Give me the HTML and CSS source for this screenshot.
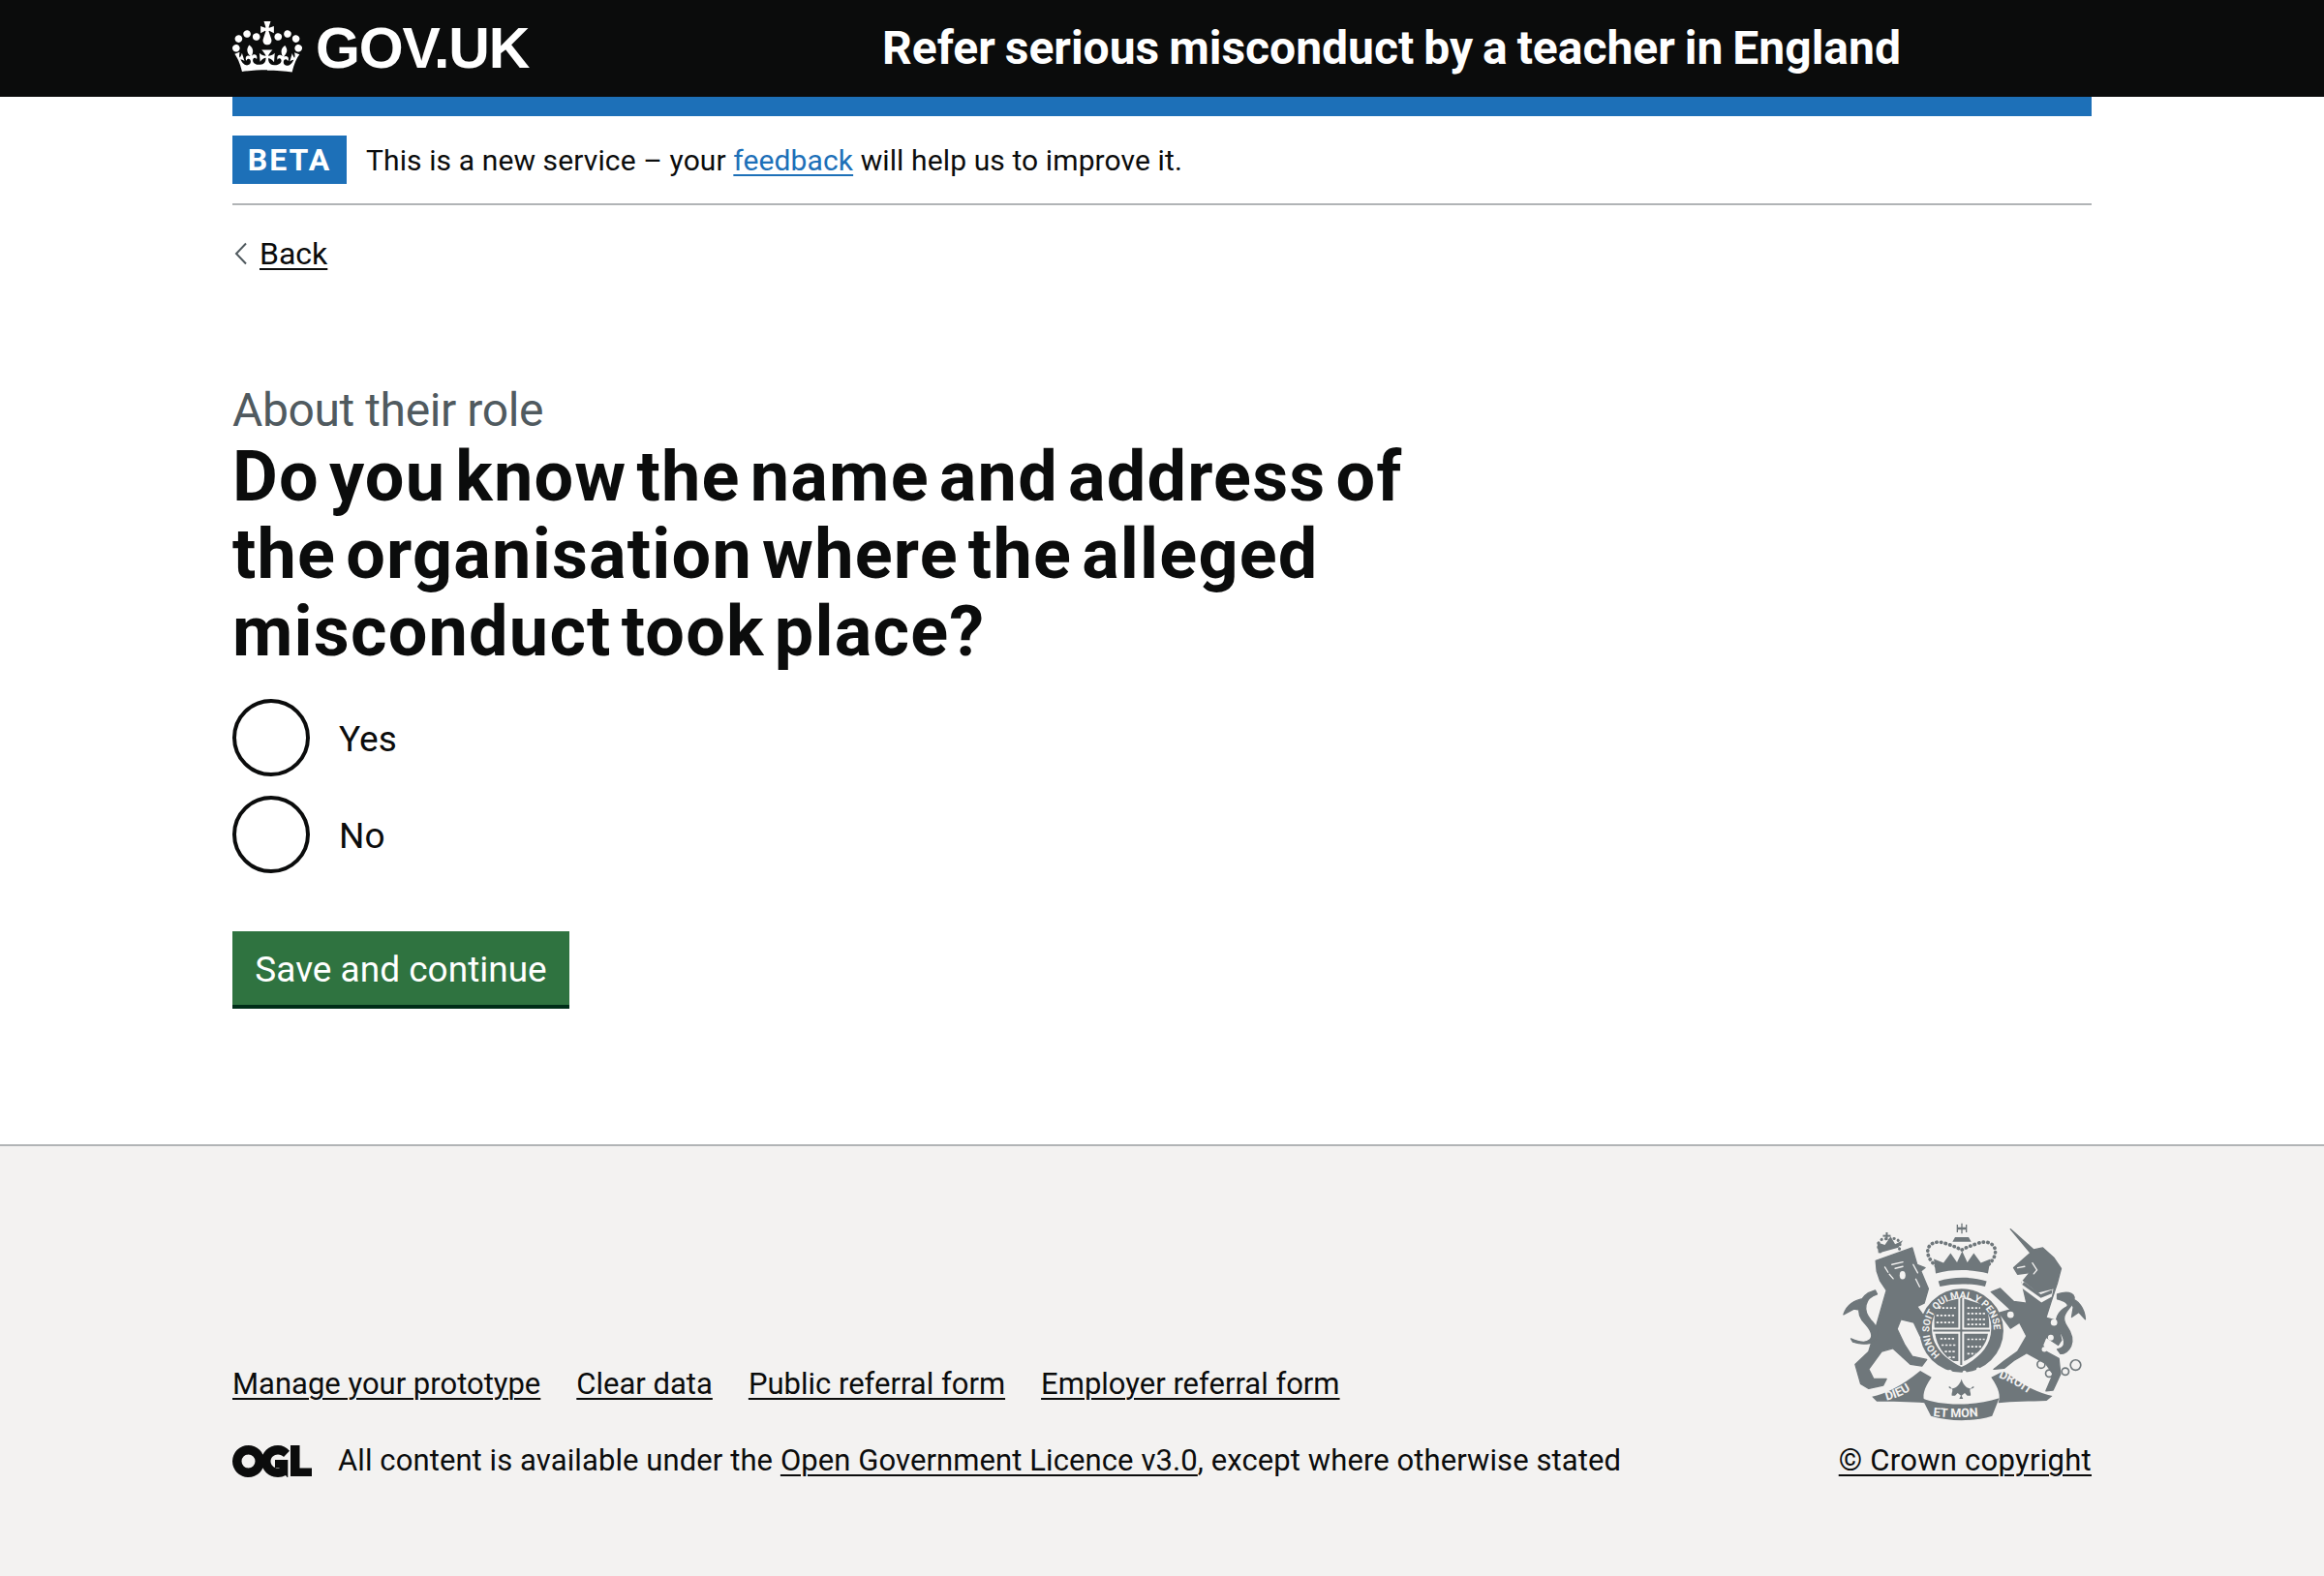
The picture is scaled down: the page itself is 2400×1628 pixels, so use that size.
FILE: index.html
```html
<!DOCTYPE html>
<html lang="en">
<head>
<meta charset="utf-8">
<title>Refer serious misconduct by a teacher in England</title>
<link rel="stylesheet" href="styles.css">
</head>
<body>
<header class="site-header">
  <div class="container site-header-inner">
    <a class="logo" href="#">
      <svg class="crown" viewBox="0 0 132 97" aria-hidden="true"><path fill="currentColor" d="M25 30.2c3.5 1.5 7.7-.2 9.1-3.7 1.5-3.6-.2-7.8-3.9-9.2-3.6-1.4-7.6.3-9.1 3.9-1.4 3.5.3 7.5 3.9 9zM9 39.5c3.6 1.5 7.8-.2 9.2-3.7 1.5-3.6-.2-7.8-3.9-9.1-3.6-1.5-7.6.2-9.1 3.8-1.4 3.5.3 7.5 3.8 9zM4.4 57.2c3.5 1.5 7.7-.2 9.1-3.8 1.5-3.6-.2-7.7-3.9-9.1-3.6-1.5-7.6.2-9.1 3.8-1.4 3.5.3 7.6 3.9 9.1zm38.3-21.4c3.5 1.5 7.7-.2 9.1-3.8 1.5-3.6-.2-7.7-3.9-9.1-3.6-1.5-7.6.2-9.1 3.8-1.3 3.6.4 7.7 3.9 9.1zm64.4-5.6c-3.6 1.5-7.8-.2-9.1-3.7-1.5-3.6.2-7.8 3.8-9.2 3.6-1.4 7.7.3 9.2 3.9 1.3 3.5-.4 7.5-3.9 9zm15.9 9.3c-3.6 1.5-7.7-.2-9.1-3.7-1.5-3.6.2-7.8 3.7-9.1 3.6-1.5 7.7.2 9.2 3.8 1.5 3.5-.3 7.5-3.8 9zm4.7 17.7c-3.6 1.5-7.8-.2-9.2-3.8-1.5-3.6.2-7.7 3.9-9.1 3.6-1.5 7.7.2 9.2 3.8 1.3 3.5-.4 7.6-3.9 9.1zM89.3 35.8c-3.6 1.5-7.8-.2-9.2-3.8-1.4-3.6.2-7.7 3.9-9.1 3.6-1.5 7.7.2 9.2 3.8 1.4 3.6-.3 7.7-3.9 9.1zM69.7 17.7l8.9 4.7V9.3l-8.9 2.8c-.2-.3-.5-.6-.9-.9L72.4 0H59.6l3.5 11.2c-.3.3-.6.5-.9.9l-8.8-2.8v13.1l8.8-4.7c.3.3.6.7.9.9l-5 15.4v.1c-.2.8-.4 1.6-.4 2.4 0 4.1 3.1 7.5 7 8.1h.2c.3 0 .7.1 1 .1.4 0 .7 0 1-.1h.2c4-.6 7.1-4.1 7.1-8.1 0-.8-.1-1.7-.4-2.4V34l-5.1-15.4c.4-.2.7-.6 1-.9zM66 92.8c16.9 0 32.8 1.1 47.1 3.2 4-16.9 8.9-26.7 14-33.5l-9.6-3.4c1 4.9 1.1 7.2 0 10.2-1.5-1.4-3-4.3-4.2-8.7L108.6 76c2.8-2 5-3.2 7.5-3.3-4.4 9.4-10 11.9-13.6 11.2-4.3-.8-6.3-4.6-5.6-7.9 1-4.7 5.7-5.9 8-.5 4.3-8.7-3-11.4-7.6-8.8 7.1-7.2 7.9-13.5 2.1-21.1-8 6.1-8.1 12.3-4.5 20.8-4.7-5.4-12.1-2.5-9.5 6.2 3.4-5.2 7.9-2 7.2 3.1-.6 4.3-6.4 7.8-13.5 7.2-10.3-.9-10.9-8-11.2-13 2.5-.5 7.1 1.8 11 7.3L80.2 60c-4.1 4.4-8 5.3-12.3 5.4 1.4-4.4 8-11.6 8-11.6H55.5s6.4 7.2 7.9 11.6c-4.2-.1-8-1-12.3-5.4l1.4 16.4c3.9-5.5 8.5-7.7 10.9-7.3-.3 5-.9 12.1-11.1 13-7.2.6-12.9-2.9-13.5-7.2-.7-5 3.8-8.3 7.1-3.1 2.7-8.7-4.6-11.6-9.4-6.2 3.7-8.5 3.6-14.7-4.6-20.8-5.8 7.6-5 13.9 2.2 21.1-4.7-2.6-11.9.1-7.7 8.8 2.3-5.5 7.1-4.2 8.1.5.7 3.3-1.3 7.1-5.7 7.9-3.5.7-9-1.8-13.5-11.2 2.5.1 4.7 1.3 7.5 3.3l-4.7-15.4c-1.2 4.4-2.7 7.2-4.3 8.7-1.1-3-.9-5.3 0-10.2l-9.5 3.4c5 6.9 9.9 16.7 14 33.5 14.8-2.1 30.8-3.2 47.7-3.2z"/></svg>
      <span class="logo-text">GOV.UK</span>
    </a>
    <a class="service-name" href="#">Refer serious misconduct by a teacher in England</a>
  </div>
</header>
<div class="container">
  <div class="blue-bar"></div>
  <div class="phase-banner">
    <strong class="tag">BETA</strong>
    <span class="phase-text">This is a new service – your <a class="link-blue" href="#">feedback</a> will help us to improve it.</span>
  </div>
  <a class="back-link" href="#"><svg class="chevron" viewBox="0 0 16 24" aria-hidden="true"><path d="M14 1.500 4 12l10 10.500" fill="none" stroke="#505a5f" stroke-width="2"/></svg><span class="back-text">Back</span></a>
  <main class="main">
    <span class="caption">About their role</span>
    <h1 class="heading">Do you know the name and address of the organisation where the alleged misconduct took place?</h1>
    <div class="radios">
      <label class="radio"><span class="radio-circle"></span><span class="radio-label">Yes</span></label>
      <label class="radio"><span class="radio-circle"></span><span class="radio-label">No</span></label>
    </div>
    <button class="button" type="button">Save and continue</button>
  </main>
</div>
<footer class="footer">
  <div class="container footer-inner">
    <div class="footer-meta">
      <ul class="footer-links">
        <li><a href="#">Manage your prototype</a></li>
        <li><a href="#">Clear data</a></li>
        <li><a href="#">Public referral form</a></li>
        <li><a href="#">Employer referral form</a></li>
      </ul>
      <div class="licence">
        <svg class="ogl" viewBox="0 0 82 33" aria-hidden="true"><path fill="#0b0c0c" d="M16.500 0a16.500 16.500 0 1 0 0 33 16.500 16.500 0 0 0 0-33zm0 9.500a7 7 0 1 1 0 14 7 7 0 0 1 0-14zM47 0C37.500 0 30 7.300 30 16.500S37.500 33 47 33c3 0 5.700-.8 8-2l2.300 3V15H44v8h4.500v.5c-.5 0-1 .1-1.500.1-4 0-7.500-3.100-7.500-7.100s3.500-7.100 7.500-7.100c2.500 0 4.500 1 6 2.600l6-6.300C55.800 2 51.700 0 47 0zM60 0h9.500v23.500H82V32H60z"/></svg>
        <span>All content is available under the <a href="#">Open Government Licence v3.0</a>, except where otherwise stated</span>
      </div>
    </div>
    <div class="copyright">
      <svg class="crest" viewBox="70 40 756 616" aria-hidden="true">
        <g fill="#6f777b" stroke="#6f777b" stroke-width="4" stroke-linejoin="round">
          <path d="M172 158 285 118l15 52 25 10-13 10 23 55-13 45-22 10 35 50 10 45-35-3-20-42-40-10-12 30 24 50 23 35 45 10-15 20-35-5-55-50-35 10-40 55 15 30h40l-10 20-45 10-25-15-17-60 42-40 15-50 20-70 20-70-20-30-10-30z"/>
          <path d="M590 60 662 124 690 118 725 150 747 182 735 228 716 285 700 335 735 345 748 405 738 420 700 395 690 420 700 440 740 462 745 510 722 560 700 562 722 510 700 478 640 445 600 468 570 492 538 495 570 470 612 440 640 392 618 350 590 368 555 320 590 310 530 255 558 244 600 285 640 290 625 225 650 195 612 200 600 180 622 160 652 134Z"/>
          <path d="M95 400c55 25 85 0 45-45-35-35-25-90 30-105l6 12c-40 12-45 50-20 80 50 50 10 90-55 68zM72 325c10-30 30-45 68-50l-18 18 12 20-30-5z"/>
          <path d="M735 262c40-12 60 0 50 25-10 22-45 40-20 75 35 50 5 85-20 85l-10-14c35-5 20-40 5-60-20-30 0-60 25-72 8-8-5-18-30-24z"/>
          <path d="M775 275c25 5 45 30 47 65l-20-22-22 15 5-30z"/>
        </g>
        <g fill="#6f777b">
          <path d="M437 42h4v12h10v-8h4v24h-4v-8h-10v12h-4V62h-10v8h-4V46h4v8h10z"/>
          <path d="M418 85h42l8 14h-58z"/>
          <path d="M358 198c50-14 112-14 162 0l8-45-30 12-22-30-20 28-16-34-16 34-20-28-22 30-30-12z"/>
          <path d="M366 222c45-15 105-15 150 0l-5 16c-45-10-95-10-140 0z"/>
          <circle cx="438" cy="375" r="130"/>
          <path d="M160 580c40-8 90-30 150-80l35 20c-25 35-30 60-20 80-45-5-110-5-150-5z"/>
          <path d="M720 578c-40-8-90-30-150-78l-40 20c25 35 30 60 22 80 45-5 100-5 150-7z"/>
          <path d="M315 585c60 25 160 25 240 0l-22 55c-60 18-130 18-190 0z"/>
          <path d="M438 525c5 18 16 30 30 30s10-15-2 0c-5 8 2 12 0 22h-10l-8-8-10 8 5 10h-12l5-10-10-8-8 8h-10c-2-10 5-14 0-22-10-15-15 0-2 0 14 0 27-12 32-30z"/>
        </g>
        <g fill="none" stroke="#6f777b" stroke-dasharray="1 13" stroke-linecap="round">
          <path d="M360 175c-50-40-25-90 30-70 25 8 40 15 48 20 8-5 25-12 48-20 55-20 80 30 30 70" stroke-width="11"/>
          <path d="M186 130c-20-30 10-50 28-35 15-15 45 0 28 35" stroke-width="9"/>
        </g>
        <g fill="#6f777b"><path d="M180 135l62-18 14-22-24 12-14-24-18 26-24-8z"/><rect x="203" y="70" width="6" height="24"/><rect x="194" y="78" width="24" height="6"/></g>
        <ellipse cx="255" cy="203" rx="9" ry="13" fill="#f3f2f1"/>
        <g fill="none" stroke="#f3f2f1" stroke-width="4" stroke-linecap="round">
          <path d="M222 170l34-8M232 182l24-6M214 200l12 14M200 178l10 16M288 170l14 26M296 215l12 24"/>
          <path d="M658 165l14 22-10 12M612 180l22-4"/>
        </g>
        <path d="M625 218l50 40 48-12-5 24-32 18-65-48z" fill="#f3f2f1"/>
        <path d="M632 224l52 38 36-14-2 12-34 14-58-42z" fill="#6f777b"/>
        <g fill="none" stroke="#6f777b" stroke-width="5">
          <circle cx="685" cy="480" r="12"/><circle cx="710" cy="508" r="11"/><circle cx="760" cy="502" r="11"/><circle cx="792" cy="482" r="16"/>
        </g>
        <g fill="#f3f2f1">
          <circle cx="715" cy="397" r="9"/><circle cx="695" cy="433" r="8"/><circle cx="725" cy="350" r="10"/><circle cx="603" cy="240" r="10"/><circle cx="590" cy="326" r="10"/>
          <path d="M438 272a92 92 0 0 1 92 98c0 55-42 94-92 118-50-24-92-63-92-118a92 92 0 0 1 92-98z"/>
          <circle cx="402" cy="503" r="6"/><circle cx="447" cy="505" r="6"/><circle cx="490" cy="495" r="6"/>
        </g>
        <path d="M434 268h6v214h-6zM350 372h176v6H350z" fill="#6f777b"/>
        <g fill="#6f777b">
          <path d="M362 292l66-16v90h-74c-2-25 0-50 8-74z"/>
          <path d="M446 276l64 20c12 20 14 45 14 70h-78z"/>
          <path d="M356 385h72v85l-15 0c-30-15-52-50-57-85z"/>
          <path d="M446 385h74c-5 35-30 65-74 85z"/>
        </g>
        <g fill="none" stroke="#f3f2f1" stroke-width="5" stroke-dasharray="7 5">
          <path d="M366 305h54M360 328h60M360 350h60"/>
          <path d="M456 305l40 0M456 322l55 0M456 340l60 0M456 356l60 0"/>
          <path d="M372 400l46 0M376 420l44 0M386 440l34 0M398 458l22 0"/>
          <path d="M456 402h54M456 425h46M456 447h26"/>
        </g>
        <defs>
          <path id="garter" d="M375 452a100 100 0 1 1 126 0"/>
          <path id="dieu" d="M205 592c40-10 70-25 105-55"/>
          <path id="droit" d="M552 520c40 15 80 40 118 70"/>
          <path id="etmon" d="M350 640c50 6 120 6 175-3"/>
        </defs>
        <g class="crest-text">
          <text class="crest-small"><textPath href="#garter" startOffset="4">HONI SOIT QUI MAL Y PENSE</textPath></text>
          <text class="crest-big"><textPath href="#dieu">DIEU</textPath></text>
          <text class="crest-big"><textPath href="#droit">DROIT</textPath></text>
          <text class="crest-big"><textPath href="#etmon">ET MON</textPath></text>
        </g>
      </svg>
      <a href="#">© Crown copyright</a>
    </div>
  </div>
</footer>
</body>
</html>
```

FILE: styles.css
```css
* { box-sizing: border-box; }
html, body { margin: 0; padding: 0; }
body {
  font-family: Roboto, "Noto Sans", sans-serif;
  color: #0b0c0c;
  background: #fff;
  min-height: 1628px;
  display: flex;
  flex-direction: column;
}
a { color: inherit; text-decoration: underline; text-decoration-thickness: 2px; text-underline-offset: 4px; }
.container { width: 1920px; margin: 0 auto; }

.site-header { background: #0b0c0c; height: 100px; color: #fff; }
.site-header-inner { display: flex; align-items: center; height: 100px; }
.logo { display: flex; align-items: center; width: 671px; color: #fff; text-decoration: none; }
.crown { width: 72px; height: 53px; margin: 0 14px 3px 0; }
.logo-text { font-family: "Liberation Sans", Arial, sans-serif; font-weight: 700; font-size: 59px; line-height: 1; letter-spacing: -1.2px; }
.service-name { font-weight: 700; font-size: 48px; line-height: 1; color: #fff; text-decoration: none; white-space: nowrap; word-spacing: -2px; }

.blue-bar { height: 20px; background: #1d70b8; }
.phase-banner { display: flex; align-items: center; height: 92px; border-bottom: 2px solid #b1b4b6; }
.tag { display: block; width: 118px; height: 50px; line-height: 50px; text-align: center; background: #1d70b8; color: #fff; font-size: 32px; font-weight: 700; letter-spacing: 2px; margin-right: 20px; }
.phase-text { font-size: 30px; letter-spacing: 0.11px; }
.link-blue { color: #1d70b8; }

.back-link { display: inline-flex; align-items: center; margin-top: 30px; font-size: 32px; line-height: 40px; text-decoration: none; }
.chevron { width: 16px; height: 24px; margin-right: 12px; }
.back-text { text-decoration: underline; text-decoration-thickness: 2px; text-underline-offset: 4px; }

.main { padding-top: 117px; }
.caption { display: block; font-size: 48px; line-height: 50px; color: #505a5f; letter-spacing: -0.4px; }
.heading { margin: 4px 0 29px; width: 1240px; font-size: 72px; line-height: 80px; font-weight: 700; letter-spacing: 1.2px; word-spacing: -9px; }
.radios { display: flex; flex-direction: column; gap: 20px; }
.radio { display: flex; align-items: center; height: 80px; font-size: 37px; }
.radio-circle { width: 80px; height: 80px; border: 4px solid #0b0c0c; border-radius: 50%; background: #fff; margin-right: 30px; }
.radio-label { padding-top: 2px; }
.button { display: block; margin-top: 60px; width: 348px; height: 76px; border: 0; background: #2f7340; color: #fff; box-shadow: 0 4px 0 #002d18; font-family: inherit; font-size: 37px; line-height: 1; padding: 3px 0 0; }

.footer { flex: 1; background: #f3f2f1; border-top: 2px solid #b1b4b6; margin-top: 144px; padding-top: 79px; padding-bottom: 100px; font-size: 31px; }
.footer-inner { display: flex; justify-content: space-between; align-items: flex-end; }
.footer-links { display: flex; gap: 37px; list-style: none; margin: 0 0 29px; padding: 0; line-height: 50px; }
.licence { display: flex; align-items: center; gap: 27px; line-height: 50px; letter-spacing: 0.09px; }
.ogl { width: 82px; height: 33px; }
.copyright { display: flex; flex-direction: column; align-items: center; gap: 16px; line-height: 50px; letter-spacing: 0.27px; }
.crest { width: 252px; height: 205px; }
.crest-text { fill: #f3f2f1; font-family: Roboto, sans-serif; font-weight: 700; letter-spacing: 0; }
.crest-small { font-size: 30px; }
.crest-big { font-size: 38px; }
```
